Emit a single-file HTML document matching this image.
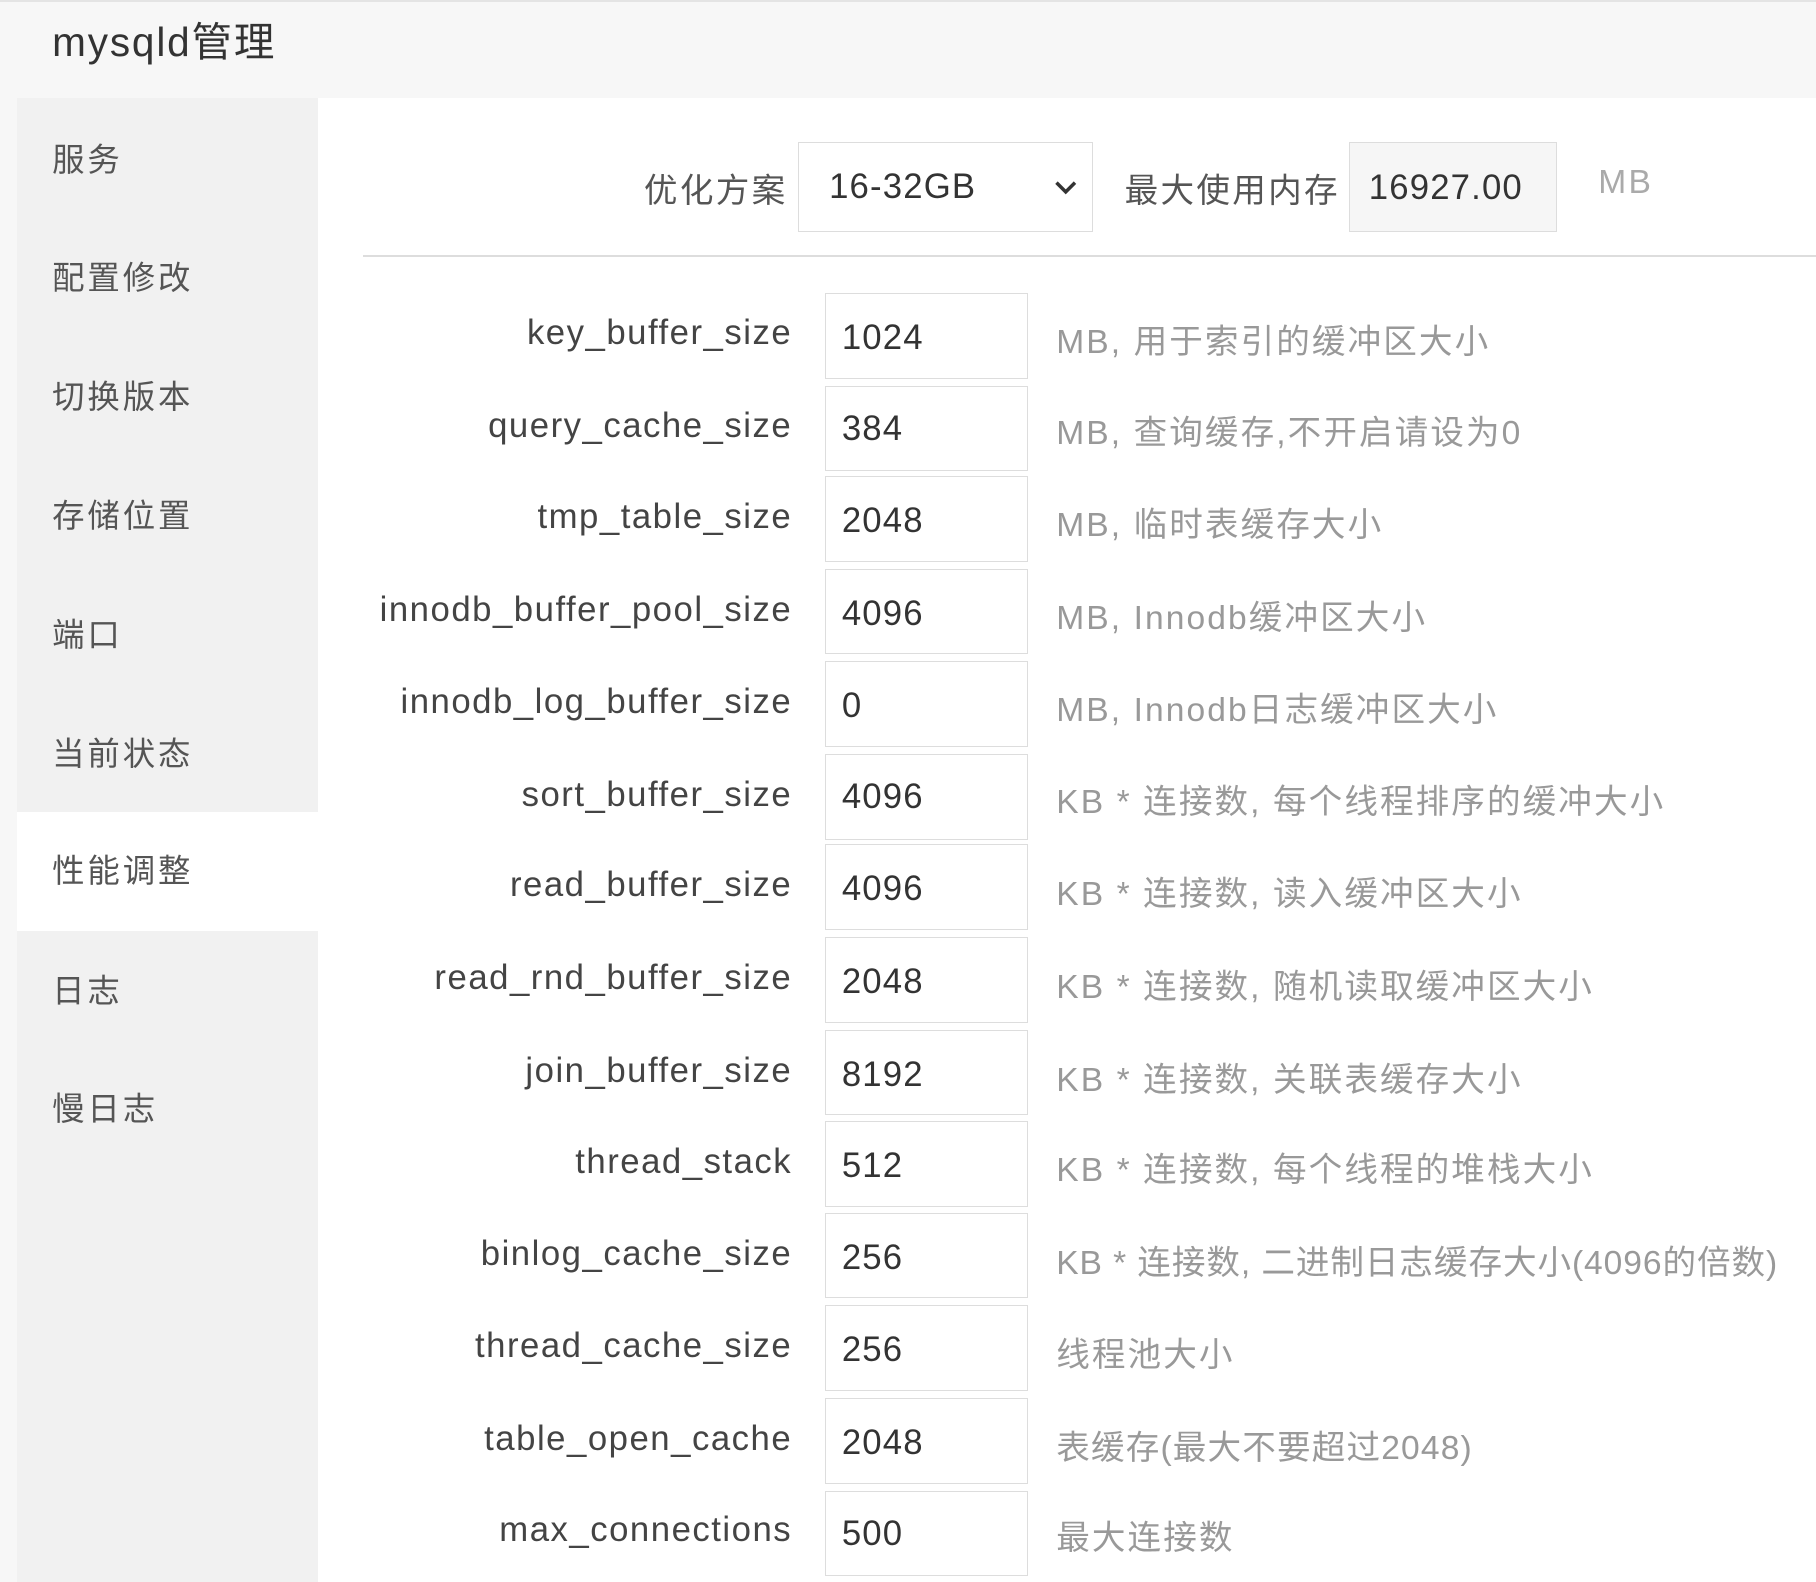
<!DOCTYPE html>
<html><head><meta charset="utf-8"><style>
html,body{margin:0;padding:0}
body{width:1816px;height:1582px;overflow:hidden;background:#fff;font-family:"Liberation Sans","Noto Sans CJK SC",sans-serif}
#w{zoom:1.15816;width:1568px;height:1366px;position:relative;background:#f7f7f7;overflow:hidden}
.t{position:absolute;left:45px;top:8px;font-size:35px;color:#333;letter-spacing:1.6px}
.side{position:absolute;left:15px;top:85px;width:260px;height:1290px;background:#f1f1f1}
.side div{position:absolute;left:30px;font-size:28px;color:#555;height:103px;line-height:103px;letter-spacing:2.5px}
.side .a{left:0;width:260px;padding-left:30px;box-sizing:border-box;background:#fff}
.main{position:absolute;left:275px;top:85px;right:0;bottom:0;background:#fff}
.lb{position:absolute;font-size:29px;color:#555;white-space:nowrap;letter-spacing:2px}
.in{position:absolute;border:1px solid #ddd;box-sizing:border-box;font-size:30px;color:#333;padding-left:14px;background:#fff;letter-spacing:1px}
.d{position:absolute;left:912px;font-size:29px;color:#999;white-space:nowrap;letter-spacing:1.8px}
.r{position:absolute;width:684px;text-align:right;font-size:30px;color:#444;left:0;letter-spacing:1.3px}
</style></head><body><div id="w">
<div style="position:absolute;left:0;right:0;top:0;height:2px;background:#e4e4e4"></div>
<div class="t">mysqld管理</div>
<div class="side">
<div style="top:2px">服务</div><div style="top:104px">配置修改</div><div style="top:207px">切换版本</div><div style="top:310px">存储位置</div><div style="top:412px">端口</div><div style="top:515px">当前状态</div><div class="a" style="top:616px">性能调整</div><div style="top:720px">日志</div><div style="top:822px">慢日志</div>
</div>
<div class="main"></div>
<div class="lb" style="left:556px;top:141px">优化方案</div>
<div class="in" style="left:689px;top:123px;width:255px;height:77px;line-height:77px;padding-left:26px">16-32GB<svg style="position:absolute;right:12px;top:30px" width="22" height="16" viewBox="0 0 22 16"><path d="M3 4 L11 12 L19 4" fill="none" stroke="#333" stroke-width="3"/></svg></div>
<div class="lb" style="left:971px;top:141px">最大使用内存</div>
<div class="in" style="left:1165px;top:123px;width:179px;height:77px;line-height:78px;background:#f6f6f6;padding-left:16px">16927.00</div>
<div class="lb" style="left:1380px;top:142px;color:#aaa">MB</div>
<div style="position:absolute;left:313px;right:0;top:220px;height:2px;background:#ddd"></div>
<div class="r" style="top:271px">key_buffer_size</div><div class="in" style="left:712px;top:253px;width:176px;height:74px;line-height:76px">1024</div><div class="d" style="top:271px">MB, 用于索引的缓冲区大小</div>
<div class="r" style="top:351px">query_cache_size</div><div class="in" style="left:712px;top:333px;width:176px;height:74px;line-height:74px">384</div><div class="d" style="top:350px">MB, 查询缓存,不开启请设为0</div>
<div class="r" style="top:430px">tmp_table_size</div><div class="in" style="left:712px;top:411px;width:176px;height:74px;line-height:76px">2048</div><div class="d" style="top:429px">MB, 临时表缓存大小</div>
<div class="r" style="top:510px">innodb_buffer_pool_size</div><div class="in" style="left:712px;top:491px;width:176px;height:74px;line-height:76px">4096</div><div class="d" style="top:509px">MB, Innodb缓冲区大小</div>
<div class="r" style="top:590px">innodb_log_buffer_size</div><div class="in" style="left:712px;top:571px;width:176px;height:74px;line-height:76px">0</div><div class="d" style="top:589px">MB, Innodb日志缓冲区大小</div>
<div class="r" style="top:670px">sort_buffer_size</div><div class="in" style="left:712px;top:651px;width:176px;height:74px;line-height:74px">4096</div><div class="d" style="top:668px">KB * 连接数, 每个线程排序的缓冲大小</div>
<div class="r" style="top:748px">read_buffer_size</div><div class="in" style="left:712px;top:729px;width:176px;height:74px;line-height:76px">4096</div><div class="d" style="top:748px">KB * 连接数, 读入缓冲区大小</div>
<div class="r" style="top:828px">read_rnd_buffer_size</div><div class="in" style="left:712px;top:809px;width:176px;height:74px;line-height:76px">2048</div><div class="d" style="top:828px">KB * 连接数, 随机读取缓冲区大小</div>
<div class="r" style="top:908px">join_buffer_size</div><div class="in" style="left:712px;top:889px;width:176px;height:74px;line-height:76px">8192</div><div class="d" style="top:908px">KB * 连接数, 关联表缓存大小</div>
<div class="r" style="top:987px">thread_stack</div><div class="in" style="left:712px;top:968px;width:176px;height:74px;line-height:76px">512</div><div class="d" style="top:986px">KB * 连接数, 每个线程的堆栈大小</div>
<div class="r" style="top:1066px">binlog_cache_size</div><div class="in" style="left:712px;top:1047px;width:176px;height:74px;line-height:76px">256</div><div class="d" style="top:1066px;letter-spacing:0.8px">KB * 连接数, 二进制日志缓存大小(4096的倍数)</div>
<div class="r" style="top:1146px">thread_cache_size</div><div class="in" style="left:712px;top:1127px;width:176px;height:74px;line-height:76px">256</div><div class="d" style="top:1146px">线程池大小</div>
<div class="r" style="top:1226px">table_open_cache</div><div class="in" style="left:712px;top:1207px;width:176px;height:74px;line-height:76px">2048</div><div class="d" style="top:1226px;letter-spacing:1px">表缓存(最大不要超过2048)</div>
<div class="r" style="top:1305px">max_connections</div><div class="in" style="left:712px;top:1287px;width:176px;height:74px;line-height:74px">500</div><div class="d" style="top:1304px">最大连接数</div>
</div></body></html>
